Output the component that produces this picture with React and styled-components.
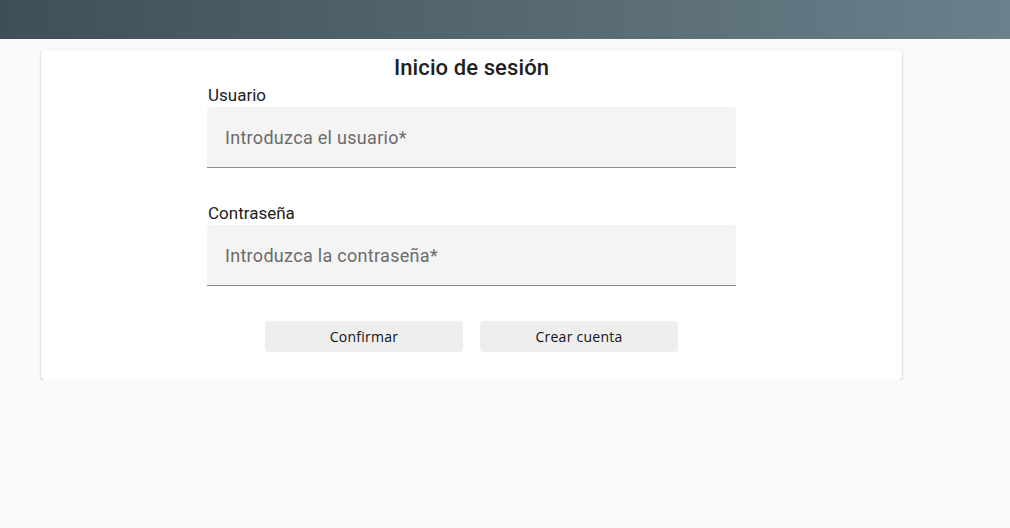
import React from 'react';
import styled, { createGlobalStyle } from 'styled-components';

const GlobalStyle = createGlobalStyle`
  body {
    margin: 0;
    background-color: #fafafa;
    font-family: Roboto, 'Liberation Sans', sans-serif;
  }
`;

const TopBar = styled.header`
  height: 39px;
  background: linear-gradient(90deg, #3f4f57 0%, #6b808b 100%);
`;

const Card = styled.main`
  box-sizing: border-box;
  width: 861px;
  margin: 11px 0 0 41px;
  padding: 5px 0 28px;
  background-color: #ffffff;
  border-radius: 4px;
  box-shadow: 0 1px 3px rgba(0, 0, 0, 0.22), 0 1px 1px rgba(0, 0, 0, 0.1);
`;

const Title = styled.h1`
  margin: 0;
  font-size: 22px;
  line-height: 26px;
  font-weight: 500;
  letter-spacing: 0.1px;
  text-align: center;
  color: #212121;
`;

const Form = styled.form`
  width: 529px;
  margin: 0 auto;
  display: flex;
  flex-direction: column;
`;

const Field = styled.div`
  display: flex;
  flex-direction: column;
  margin-top: ${(p) => (p.first ? '4px' : '35px')};
`;

const Label = styled.label`
  font-size: 17px;
  line-height: 20px;
  color: #212121;
  padding-left: 1px;
  margin-bottom: 2px;
`;

const Input = styled.input`
  box-sizing: border-box;
  height: 61px;
  padding: 0 18px;
  border: none;
  border-bottom: 1px solid #8c8c8c;
  border-radius: 4px 4px 0 0;
  background-color: #f4f4f4;
  font-family: Roboto, 'Liberation Sans', sans-serif;
  font-size: 18px;
  letter-spacing: 0.3px;
  color: #212121;
  outline: none;

  &::placeholder {
    color: #6b6b6b;
  }
`;

const Actions = styled.div`
  display: flex;
  justify-content: center;
  gap: 17px;
  margin-top: 35px;
`;

const Button = styled.button`
  width: 198px;
  height: 31px;
  border: none;
  border-radius: 4px;
  background-color: #eeeeee;
  color: #111111;
  font-family: 'Open Sans', 'Liberation Sans', sans-serif;
  font-size: 14px;
  letter-spacing: 0.25px;
  cursor: pointer;
`;

export default function App() {
  return (
    <>
      <GlobalStyle />
      <TopBar />
      <Card>
        <Title>Inicio de sesión</Title>
        <Form onSubmit={(e) => e.preventDefault()}>
          <Field first>
            <Label htmlFor="usuario">Usuario</Label>
            <Input id="usuario" type="text" placeholder="Introduzca el usuario*" />
          </Field>
          <Field>
            <Label htmlFor="password">Contraseña</Label>
            <Input id="password" type="password" placeholder="Introduzca la contraseña*" />
          </Field>
          <Actions>
            <Button type="submit">Confirmar</Button>
            <Button type="button">Crear cuenta</Button>
          </Actions>
        </Form>
      </Card>
    </>
  );
}
